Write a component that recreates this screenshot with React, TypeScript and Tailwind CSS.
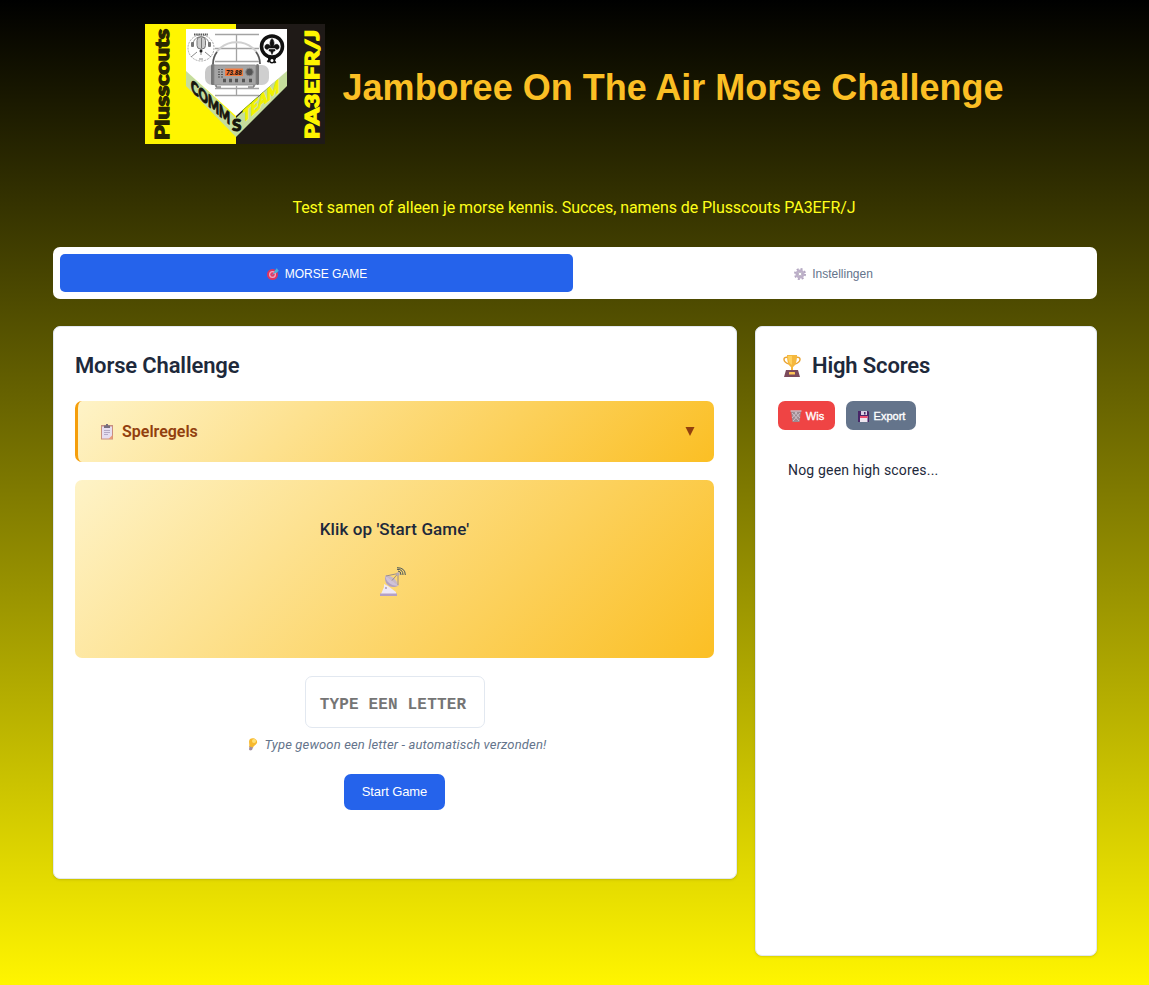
import React from "react";

function Logo() {
  return (
    <svg className="h-[120px] w-[180px] shrink-0 overflow-visible" viewBox="0 0 180 120">
      <rect width="180" height="120" fill="#1f1a17" />
      <rect width="91" height="120" fill="#fff500" />
      <path d="M41 46V62L91 113L142 62V46L91 94Z" fill="#c5dd9d" />
      <path d="M41 5H142V47L91 92L41 47Z" fill="#fff" />
      <g stroke="#a3a3a3" strokeWidth="1.3" fill="none">
        <path d="M70 10.500H114M70 24.500H114M70 37.500H114M91.500 10.500V38M70 64.500H114M70 71.500H114M91.500 62V72" />
        <path d="M68 40C69 11 114 11 115 40" stroke="#d0d0d0" strokeWidth="2" />
        <path d="M68 40Q68 33 72 28M115 40Q115 33 111 28" stroke="#555" strokeWidth="1.600" />
      </g>
      <rect x="60" y="41" width="15" height="20" rx="7" fill="#c8c8c8" />
      <rect x="66" y="40" width="4" height="21" rx="1.500" fill="#777" />
      <rect x="108" y="41" width="16" height="20" rx="7" fill="#cfcfcf" />
      <rect x="111" y="40" width="3" height="21" rx="1.500" fill="#777" />
      <rect x="69" y="41" width="42" height="20" rx="1" fill="#a5a5a5" stroke="#858585" strokeWidth=".8" />
      <rect x="80" y="44.500" width="18" height="7.500" fill="#f37b3f" />
      <text x="81" y="50.800" fontFamily="Roboto" fontWeight="900" fontStyle="italic" fontSize="6.500" textLength="16" fill="#2b1710">73.88</text>
      <path d="M73 45.500H78M73 48H78M73 50.500H78M73 53H78" stroke="#555" strokeWidth="1.200" strokeDasharray="2 1" />
      <path d="M78 56.500H81M84 56.500H87M90 56.500H93M97 56.500H100M104 56.500H107" stroke="#555" strokeWidth="3.500" />
      <path d="M71 61V63H76M109 61V63H103" fill="none" stroke="#555" />
      <circle cx="104.500" cy="48" r="3.800" fill="#555" stroke="#888" />
      <circle cx="56" cy="24" r="13" fill="#fff" stroke="#aaa" strokeWidth="1" strokeDasharray="2 1" />
      <path d="M49 10.500H63" stroke="#555" strokeWidth="2" strokeDasharray="1.500 .7" />
      <path d="M48 21C48 10 64 10 64 21M56 24V31M52 28L46 33M60 28L66 33M54 35H58" fill="none" stroke="#888" />
      <rect x="52" y="13" width="8.500" height="12" rx="3.500" fill="#ccc" stroke="#777" />
      <path d="M56.500 14V24" stroke="#777" /><circle cx="56" cy="27" r="1.500" fill="#222" />
      <rect x="46" y="18" width="3" height="5" rx="1" fill="#777" /><rect x="63" y="18" width="3" height="5" rx="1" fill="#777" />
      <circle cx="127" cy="22.500" r="10.500" fill="#fff" stroke="#111" strokeWidth="3.500" />
      <path d="M127 14.500C124.500 17 124.500 20 126 23.500C124 18.500 119 20 120 24C121 26 123.500 25.500 123.500 24H130.500C130.500 25.500 133 26 134 24C135 20 130 18.500 128 23.500C129.500 20 129.500 17 127 14.500ZM124 25.500H130V27H128.500L127 30.500L125.500 27H124Z" fill="#111" stroke="#111" strokeWidth=".6" />
      <path d="M127 33L122.500 38M127 33L130.500 39M123 34.500H131" stroke="#111" strokeWidth="2" />
      <circle cx="127" cy="36.500" r="2.300" fill="#fff" stroke="#111" strokeWidth="1.500" />
      <g fontFamily="Lato" fontWeight="900">
        <text transform="translate(24 116) rotate(-90)" fontSize="18" textLength="111" lengthAdjust="spacingAndGlyphs" fill="#292500" stroke="#292500" strokeWidth="1.200">Plusscouts</text>
        <text transform="translate(173.500 115) rotate(-90)" fontSize="18.500" textLength="109" lengthAdjust="spacingAndGlyphs" fill="#fff500" stroke="#fff500" strokeWidth="1.300">PA3EFR/J</text>
        <text transform="matrix(1 .88 0 1 46 67)" fontSize="17" textLength="39" lengthAdjust="spacingAndGlyphs" fill="#17150c" stroke="#17150c" strokeWidth="1">COMM</text>
        <text x="87" y="107" fontSize="17" fill="#17150c" stroke="#17150c">S</text>
        <text transform="matrix(1 -.88 0 1 98 99)" fontSize="17" textLength="36" lengthAdjust="spacingAndGlyphs" fill="#f2f200" stroke="#f2f200" strokeWidth="1.200">TEAM</text>
      </g>
    </svg>
  );
}

function Target() {
  return (
    <svg className="size-3" viewBox="0 0 24 24">
      <circle cx="11" cy="13" r="11" fill="#df345f" /><circle cx="11" cy="13" r="7" fill="#f0a9c4" />
      <circle cx="11" cy="13" r="4.500" fill="#e43c68" /><path d="M11 13L21 3" stroke="#45b6dd" strokeWidth="2" />
      <path d="M15 6L20 0L21 4L24 5L19 10L15 9Z" fill="#45b6dd" />
    </svg>
  );
}

function Gear() {
  return (
    <svg className="size-3" viewBox="0 0 24 24">
      <circle cx="12" cy="12" r="10" fill="none" stroke="#b3a6c0" strokeWidth="4" strokeDasharray="4 3.850" />
      <circle cx="12" cy="12" r="6.500" fill="none" stroke="#bdb0c9" strokeWidth="5" />
      <circle cx="12" cy="12" r="3.500" fill="#fff" stroke="#83768f" />
    </svg>
  );
}

function Clipboard() {
  return (
    <svg className="h-4 w-[14px]" viewBox="0 0 14 16">
      <path d="M1 1H13V15.500H1Z" fill="#c98f80" /><path d="M2 2.500H12V14.500H2Z" fill="#e6def0" />
      <path d="M4 6.500H10M4 8.500H10M4 10.500H8" stroke="#b5aac3" /><path d="M8.500 15L12.500 11V15Z" fill="#e99b77" />
      <path d="M4 4V1.500H6V0H8V1.500H10V4Z" fill="#77707f" />
    </svg>
  );
}

function Trophy() {
  return (
    <svg className="h-[22px] w-[18px]" viewBox="0 0 18 22">
      <path d="M5 2.500C-.5 1-.5 7 6 9M13 2.500C18.500 1 18.500 7 12 9" fill="none" stroke="#e9a434" strokeWidth="1.500" />
      <path d="M4 0H14C14 8 12 11 10 12V15H8V12C6 11 4 8 4 0Z" fill="#f5b83d" /><path d="M5 1H9V10Q5 8 5 1" fill="#ffd05c" />
      <path d="M3 15H15L17 22H1Z" fill="#7c4b5c" /><rect x="6" y="17" width="6" height="2.500" rx=".5" fill="#ffc658" />
    </svg>
  );
}

function Trash() {
  return (
    <svg className="h-3 w-3" viewBox="0 0 12 12">
      <path d="M1 1H11L9.500 12H2.500Z" fill="#9e8990" />
      <path d="M2 3L9 11M5 2L10 8M10 3L3 11M7 2L2 8" stroke="#d9cbd5" strokeWidth=".8" /><path d="M.5 1H11.500" stroke="#d0b4bd" strokeWidth="1.500" />
    </svg>
  );
}

function Disk() {
  return (
    <svg className="h-[11px] w-[11px]" viewBox="0 0 11 11">
      <path d="M0 0H10L11 1V11H0Z" fill="#482668" /><rect x="3" width="6" height="4" fill="#d8cfe3" /><rect x="6" y="1" width="1.500" height="2.500" fill="#482668" />
      <rect x="2" y="5" width="7.500" height="6" fill="#eee5ef" /><path d="M2 6H9.500" stroke="#ef4e72" strokeWidth="2" />
    </svg>
  );
}

function Dish() {
  return (
    <svg className="h-[29px] w-[26px]" viewBox="0 0 26 29">
      <path d="M4 17L8 19L16 25V27H1L4 20Z" fill="#efe9f6" /><path d="M0 26.500H17V29H0Z" fill="#b4a0c5" />
      <circle cx="6" cy="21" r="1" fill="#a99aba" />
      <path d="M5.500 8.500C3 17 11 23 18.500 18.500Z" fill="#b3a1bf" /><path d="M5.500 8.500L18.500 18.500C13 20 5 15 5.500 8.500Z" fill="#cfc2d8" />
      <path d="M5.500 8.500Q15 8 18.500 18.500Z" fill="#c6b8c9" />
      <path d="M6 9L18 6.500L18 18M12 13.500L18 6.500" fill="none" stroke="#92858c" strokeWidth=".9" /><circle cx="18" cy="7" r="1.700" fill="#b5a9ba" />
      <path d="M18 4Q21 4 21 8M17 2.300Q23 2 23 8M17 .7Q25.300 .7 25.300 8" fill="none" stroke="#48545a" strokeWidth="1" />
    </svg>
  );
}

function Bulb() {
  return (
    <svg className="h-[13px] w-[10px]" viewBox="0 0 10 13">
      <path d="M2 1C5-1 10 1 9 5C8 7 5 8 5 10L1 9C2 6 0 4 2 1Z" fill="#f7b92f" /><circle cx="6" cy="3" r="2" fill="#ffe177" />
      <path d="M1.500 8.500L5 9.500L4 12L2 12.500L1 11.500Z" fill="#a08da0" />
    </svg>
  );
}

export default function App() {
  return (
    <div className="flex h-[985px] flex-col bg-linear-to-b/srgb from-black to-[#fff500] pt-6 pr-[52px] pl-[53px] font-['Roboto',sans-serif] text-[#1e293b]">
      <header className="flex flex-col items-center pr-[2px]">
        <div className="flex items-center gap-[18px]">
          <Logo />
          <h1 className="mt-2 whitespace-nowrap font-['Liberation_Sans',sans-serif] text-[36px] leading-[54px] font-bold text-[#fbbf24]">Jamboree On The Air Morse Challenge</h1>
        </div>
        <p className="mt-[52px] text-[16px] leading-6 tracking-[-0.07px] text-[#ffff1a]">Test samen of alleen je morse kennis. Succes, namens de Plusscouts PA3EFR/J</p>
      </header>

      <nav className="mt-[27px] flex h-[52px] shrink-0 gap-[5px] rounded-[7px] bg-white p-[7px] font-['Liberation_Sans',sans-serif] text-[12px]">
        <button className="flex w-[513px] items-center justify-center gap-[6px] rounded-[5px] bg-[#2563eb] pt-px pl-px text-white"><Target />MORSE GAME</button>
        <button className="flex flex-1 items-center justify-center gap-[6px] pt-px pr-px text-[#64748b]"><Gear />Instellingen</button>
      </nav>

      <main className="mt-[27px] flex items-start gap-[18px]">
        <section className="flex h-[553px] w-[684px] shrink-0 flex-col rounded-[7px] border border-[#e2e8f0] bg-white px-[21px] pt-[21px] shadow-sm">
          <h2 className="text-[22px] leading-[35px] font-semibold tracking-[-0.15px]">Morse Challenge</h2>
          <div className="mt-[18px] flex h-[61px] w-[639px] items-center rounded-[7px] border-l-[3px] border-[#f59e0b] bg-linear-135/srgb from-[#fef3c7] to-[#fbbf24] pr-[19px] pl-[22px] text-[16px] font-semibold text-[#92400e]">
            <Clipboard /><span className="ml-2 flex-1">Spelregels</span>
            <svg className="h-[9px] w-[10px]" viewBox="0 0 10 9"><path d="M.5 0H9.500L5 9Z" fill="#92400e" /></svg>
          </div>
          <div className="mt-[18px] flex h-[178px] w-[639px] flex-col items-center rounded-[7px] bg-linear-135/srgb from-[#fef3c7] to-[#fbbf24] pt-9">
            <p className="text-[17px] leading-[27px] font-medium tracking-[0.1px]">Klik op 'Start Game'</p>
            <div className="mt-6 pr-[3px]"><Dish /></div>
          </div>
          <div className="flex w-[639px] flex-col items-center">
            <input aria-label="Letter" placeholder="TYPE EEN LETTER" className="mt-[18px] h-[52px] w-[180px] rounded-[7px] border border-[#e2e8f0] pt-[5px] pr-[3px] text-center font-['Liberation_Mono',monospace] text-[16px] font-bold tracking-[0.15px] placeholder:text-[#757575]" />
            <p className="mt-[6px] flex items-center gap-[7px] pl-[5px] text-[13px] leading-[21px] tracking-[0.15px] text-[#64748b] italic"><Bulb />Type gewoon een letter - automatisch verzonden!</p>
            <button className="mt-[19px] h-9 w-[101px] rounded-[7px] bg-[#2563eb] font-['Liberation_Sans',sans-serif] text-[13px] tracking-[-0.1px] text-white">Start Game</button>
          </div>
        </section>

        <aside className="h-[630px] w-[342px] shrink-0 rounded-[7px] border border-[#e2e8f0] bg-white px-[22px] pt-[21px] shadow-sm">
          <h2 className="flex items-center gap-[11px] pl-[5px] text-[22px] leading-[35px] font-semibold tracking-[-0.15px]"><Trophy />High Scores</h2>
          <div className="mt-[18px] flex gap-[11px] font-['Liberation_Sans',sans-serif] text-[11px] text-white [-webkit-text-stroke:0.35px_white]">
            <button className="flex h-[29px] w-[57px] items-center justify-center gap-1 rounded-[7px] bg-[#ef4444] pt-px pl-px"><Trash />Wis</button>
            <button className="flex h-[29px] w-[70px] items-center justify-center gap-[5px] rounded-[7px] bg-[#64748b] pt-px pl-px"><Disk />Export</button>
          </div>
          <p className="mt-[29px] ml-[10px] text-[14px] leading-[22px] tracking-[0.18px]">Nog geen high scores...</p>
        </aside>
      </main>
    </div>
  );
}
